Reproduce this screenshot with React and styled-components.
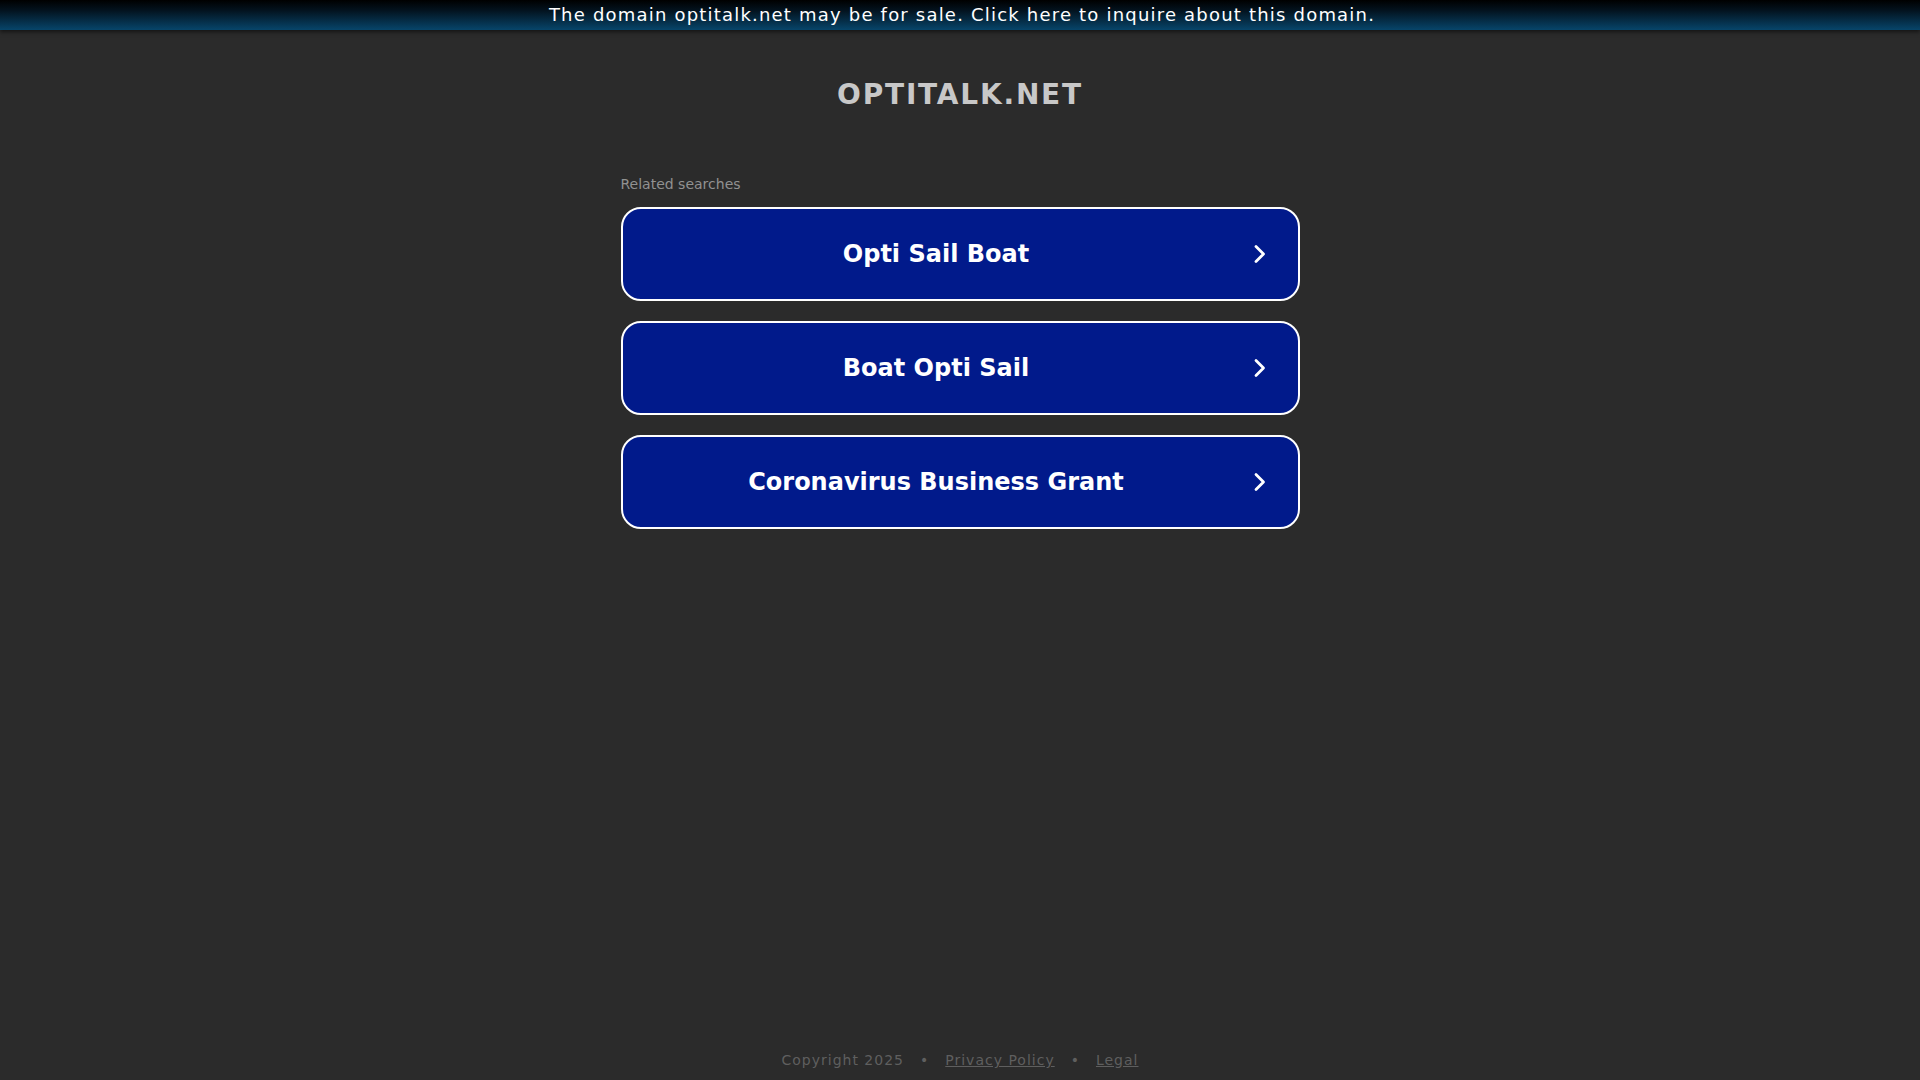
import React from 'react';
import styled, { createGlobalStyle } from 'styled-components';

const GlobalStyle = createGlobalStyle`
    html, body {
        margin: 0;
        padding: 0;
        background: #2b2b2b;
        font-family: "DejaVu Sans", "Noto Sans", sans-serif;
    }
`

const searches = ['Opti Sail Boat', 'Boat Opti Sail', 'Coronavirus Business Grant'];

function Chevron() {
    return (
        <svg width="14" height="20" viewBox="0 0 14 20" fill="none">
            <path d="M3 2.5 L10.5 10 L3 17.5" stroke="#fff" strokeWidth="2.8" strokeLinecap="round" strokeLinejoin="round" />
        </svg>
    );
}

export default function App() {
    return (
        <>
            <GlobalStyle />
            <Page>
                <TopBar href="#">The domain optitalk.net may be for sale. Click here to inquire about this domain.</TopBar>
                <Title>OPTITALK.NET</Title>
                <Main>
                    <Label>Related searches</Label>
                    <List>
                        {searches.map((s) => (
                            <SearchLink key={s} href="#">
                                <SearchText>{s}</SearchText>
                                <Arrow><Chevron /></Arrow>
                            </SearchLink>
                        ))}
                    </List>
                </Main>
                <Footer>
                    <span>Copyright 2025</span>
                    <Dot>•</Dot>
                    <FooterLink href="#">Privacy Policy</FooterLink>
                    <Dot>•</Dot>
                    <FooterLink href="#">Legal</FooterLink>
                </Footer>
            </Page>
        </>
    );
}

const Page = styled.div`
    min-height: 100vh;
    display: flex;
    flex-direction: column;
    align-items: center;
    box-sizing: border-box;
`

const TopBar = styled.a`
    align-self: stretch;
    height: 30px;
    display: flex;
    align-items: center;
    justify-content: center;
    padding: 0 0 2px 4px;
    box-sizing: border-box;
    background: linear-gradient(to bottom, #000 0%, #03131f 35%, #07456a 100%);
    box-shadow: 0 2px 4px rgba(0, 0, 0, 0.55);
    color: #fff;
    font-size: 18px;
    letter-spacing: 1.2px;
    text-decoration: none;
`

const Title = styled.h1`
    margin: 49px 0 0;
    font-size: 28px;
    font-weight: bold;
    letter-spacing: 1.8px;
    color: #c8c8c8;
    line-height: 32px;
`

const Main = styled.div`
    width: 679px;
    margin-top: 64px;
    display: flex;
    flex-direction: column;
`

const Label = styled.div`
    font-size: 14px;
    color: #919191;
    line-height: 18px;
    margin-bottom: 14px;
`

const List = styled.div`
    display: flex;
    flex-direction: column;
    gap: 20px;
`

const SearchLink = styled.a`
    position: relative;
    height: 94px;
    box-sizing: border-box;
    border: 2px solid #fff;
    border-radius: 20px;
    background: #011a8b;
    display: flex;
    align-items: center;
    padding: 0 68px 0 20px;
    text-decoration: none;
`

const SearchText = styled.span`
    flex: 1;
    text-align: center;
    color: #fff;
    font-size: 24px;
    font-weight: bold;
`

const Arrow = styled.span`
    position: absolute;
    right: 31px;
    top: 50%;
    transform: translateY(-50%);
    display: flex;
`

const Footer = styled.div`
    margin-top: auto;
    padding: 10px 0 12px;
    display: flex;
    gap: 16px;
    font-size: 14px;
    letter-spacing: 1px;
    color: #5f5f5f;
`

const Dot = styled.span`
    color: #5f5f5f;
`

const FooterLink = styled.a`
    color: #5f5f5f;
    text-decoration: underline;
`
